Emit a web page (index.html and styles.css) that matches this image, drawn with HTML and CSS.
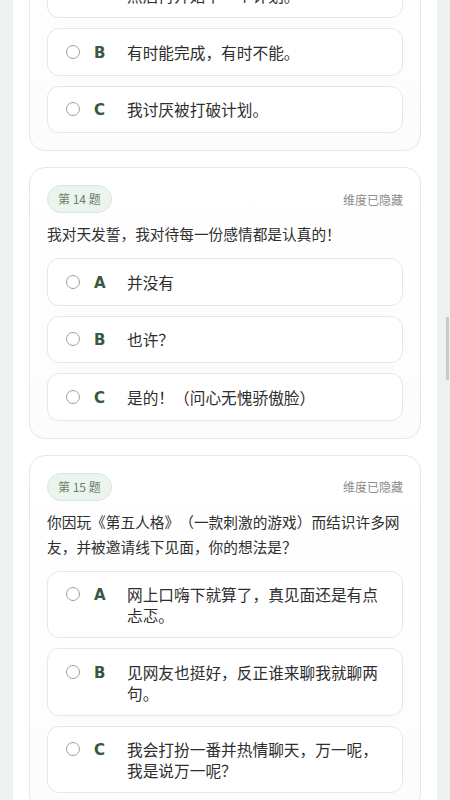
FILE: index.html
```html
<!DOCTYPE html>
<html lang="zh-CN">
<head>
    <meta charset="UTF-8">
    <meta name="viewport" content="width=device-width, initial-scale=1.0">
    <title>性格测试</title>
    <link rel="stylesheet" href="styles.css">
</head>
<body>
    <div class="page">
        <div class="quiz-list">

            <!-- Question 13 -->
            <div class="question-card">
                <div class="question-head">
                    <span class="question-no">第 13 题</span>
                    <span class="question-dim">维度已隐藏</span>
                </div>
                <p class="question-text">你会按照计划把事情做完吗？</p>
                <div class="options">
                    <label class="option">
                        <span class="radio"></span>
                        <span class="letter">A</span>
                        <span class="option-text">总是能按照计划一步一步完成事情，然后再开始下一个计划。</span>
                    </label>
                    <label class="option">
                        <span class="radio"></span>
                        <span class="letter">B</span>
                        <span class="option-text">有时能完成，有时不能。</span>
                    </label>
                    <label class="option">
                        <span class="radio"></span>
                        <span class="letter">C</span>
                        <span class="option-text">我讨厌被打破计划。</span>
                    </label>
                </div>
            </div>

            <!-- Question 14 -->
            <div class="question-card">
                <div class="question-head">
                    <span class="question-no">第 14 题</span>
                    <span class="question-dim">维度已隐藏</span>
                </div>
                <p class="question-text">我对天发誓，我对待每一份感情都是认真的！</p>
                <div class="options">
                    <label class="option">
                        <span class="radio"></span>
                        <span class="letter">A</span>
                        <span class="option-text">并没有</span>
                    </label>
                    <label class="option">
                        <span class="radio"></span>
                        <span class="letter">B</span>
                        <span class="option-text">也许？</span>
                    </label>
                    <label class="option">
                        <span class="radio"></span>
                        <span class="letter">C</span>
                        <span class="option-text">是的！（问心无愧骄傲脸）</span>
                    </label>
                </div>
            </div>

            <!-- Question 15 -->
            <div class="question-card">
                <div class="question-head">
                    <span class="question-no">第 15 题</span>
                    <span class="question-dim">维度已隐藏</span>
                </div>
                <p class="question-text">你因玩《第五人格》（一款刺激的游戏）而结识许多网友，并被邀请线下见面，你的想法是？</p>
                <div class="options">
                    <label class="option">
                        <span class="radio"></span>
                        <span class="letter">A</span>
                        <span class="option-text">网上口嗨下就算了，真见面还是有点忐忑。</span>
                    </label>
                    <label class="option">
                        <span class="radio"></span>
                        <span class="letter">B</span>
                        <span class="option-text">见网友也挺好，反正谁来聊我就聊两句。</span>
                    </label>
                    <label class="option">
                        <span class="radio"></span>
                        <span class="letter">C</span>
                        <span class="option-text">我会打扮一番并热情聊天，万一呢，我是说万一呢？</span>
                    </label>
                </div>
            </div>

        </div>
    </div>

    <div class="scroll-thumb"></div>
</body>
</html>
```

FILE: styles.css
```css
/* General */
body {
    margin: 0;
    background-color: #edf2ee;
    font-family: "Noto Sans CJK SC", "Noto Sans", sans-serif;
    color: #333;
    overflow: hidden;
    text-spacing-trim: space-all;
}

.page {
    width: 424px;
    margin: 0 auto;
    min-height: 100vh;
    background-color: #fff;
    padding: 0 16px;
    box-sizing: border-box;
}

/* list is scrolled down a bit */
.quiz-list {
    display: flex;
    flex-direction: column;
    gap: 16px;
    margin-top: -140.5px;
}

/* Question card */
.question-card {
    border: 1px solid #e1eae3;
    border-radius: 16px;
    padding: 17px;
    background: linear-gradient(180deg, #ffffff 0%, #fbfcfb 100%);
}

.question-head {
    display: flex;
    justify-content: space-between;
    align-items: center;
    height: 28px;
}

.question-no {
    height: 28px;
    line-height: 26px;
    padding: 0 10px;
    box-sizing: border-box;
    border: 1px solid #d9e8dc;
    border-radius: 14px;
    background-color: #ebf4ed;
    color: #6c7f71;
    font-size: 12px;
}

.question-dim {
    color: #8c8c8c;
    font-size: 12px;
}

.question-text {
    margin: 8px 0 12px;
    font-size: 14.7px;
    line-height: 25px;
    color: #2e2e2e;
}

/* Options */
.options {
    display: flex;
    flex-direction: column;
    gap: 10px;
}

.option {
    display: flex;
    align-items: flex-start;
    padding: 12.5px 18px 11px;
    border: 1px solid #e2e9e3;
    border-radius: 12px;
    background-color: #fff;
    cursor: pointer;
}

.radio {
    flex: none;
    width: 14px;
    height: 14px;
    margin-top: 3px;
    border: 1.5px solid #a0a0a0;
    border-radius: 50%;
    box-sizing: border-box;
    background-color: #fff;
}

.letter {
    flex: none;
    width: 18px;
    margin-left: 14px;
    line-height: 22px;
    font-family: "DejaVu Sans", sans-serif;
    font-weight: bold;
    font-size: 15px;
    color: #3a5842;
}

.option-text {
    flex: 1;
    margin-left: 15px;
    font-size: 15.7px;
    line-height: 21px;
    color: #2e2e2e;
}

.scroll-thumb {
    position: fixed;
    right: 1px;
    top: 317px;
    width: 3px;
    height: 63px;
    background-color: #c9cbc9;
}
```
